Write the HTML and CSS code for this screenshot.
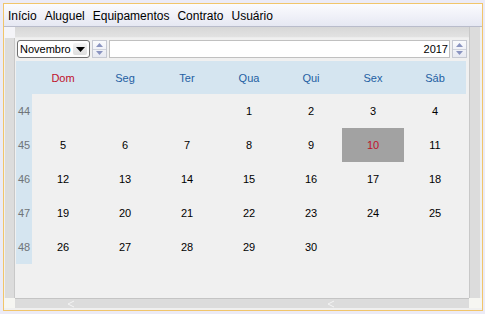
FILE: index.html
```html
<!DOCTYPE html>
<html lang="pt">
  <head>
    <meta charset="UTF-8">
    <title>Calendário</title>
    <link rel="stylesheet" href="styles.css">
  </head>
  <body>
    <div class="window">
      <div class="menubar">
        <span>Início</span>
        <span>Aluguel</span>
        <span>Equipamentos</span>
        <span>Contrato</span>
        <span>Usuário</span>
      </div>
      <div class="pane">
        <div class="strip-corner"></div>
        <div class="strip-top"></div>
        <div class="vbar"></div>

        <div class="strip-left"></div>
        <div class="calendar">
          <div class="nav">
            <div class="combo">
              <span class="combo-text">Novembro</span>
              <span class="combo-btn"><svg width="9" height="5" viewBox="0 0 9 5"><path d="M0 0h9L4.5 5z" fill="#000"/></svg></span>
            </div>
            <div class="spin">
              <span class="spin-up"><svg width="7" height="4" viewBox="0 0 7 4"><path d="M0 4h7L3.5 0z" fill="#8a94c0"/></svg></span>
              <span class="spin-down"><svg width="7" height="4" viewBox="0 0 7 4"><path d="M0 0h7L3.5 4z" fill="#8a94c0"/></svg></span>
            </div>
            <div class="year">2017</div>
            <div class="spin">
              <span class="spin-up"><svg width="7" height="4" viewBox="0 0 7 4"><path d="M0 4h7L3.5 0z" fill="#8a94c0"/></svg></span>
              <span class="spin-down"><svg width="7" height="4" viewBox="0 0 7 4"><path d="M0 0h7L3.5 4z" fill="#8a94c0"/></svg></span>
            </div>
          </div>
          <div class="month">
            <div class="wk head"></div>
            <div class="dname sun">Dom</div>
            <div class="dname">Seg</div>
            <div class="dname">Ter</div>
            <div class="dname">Qua</div>
            <div class="dname">Qui</div>
            <div class="dname">Sex</div>
            <div class="dname">Sáb</div>

            <div class="wk">44</div>
            <div class="day"></div><div class="day"></div><div class="day"></div>
            <div class="day">1</div><div class="day">2</div><div class="day">3</div><div class="day">4</div>

            <div class="wk">45</div>
            <div class="day">5</div><div class="day">6</div><div class="day">7</div>
            <div class="day">8</div><div class="day">9</div><div class="day today">10</div><div class="day">11</div>

            <div class="wk">46</div>
            <div class="day">12</div><div class="day">13</div><div class="day">14</div>
            <div class="day">15</div><div class="day">16</div><div class="day">17</div><div class="day">18</div>

            <div class="wk">47</div>
            <div class="day">19</div><div class="day">20</div><div class="day">21</div>
            <div class="day">22</div><div class="day">23</div><div class="day">24</div><div class="day">25</div>

            <div class="wk">48</div>
            <div class="day">26</div><div class="day">27</div><div class="day">28</div>
            <div class="day">29</div><div class="day">30</div><div class="day"></div><div class="day"></div>
          </div>
        </div>
        <div class="vbar right"></div>

        <div class="sb-corner"></div>
        <div class="hbar">
          <svg class="chev first" width="8" height="8" viewBox="0 0 8 8"><path d="M7 1L1 4l6 3" fill="none" stroke="#f4f4f4" stroke-width="1"/></svg>
          <svg class="chev" width="8" height="8" viewBox="0 0 8 8"><path d="M7 1L1 4l6 3" fill="none" stroke="#f4f4f4" stroke-width="1"/></svg>
        </div>
        <div class="sb-corner"></div>
      </div>
    </div>
  </body>
</html>
```

FILE: styles.css
```css
body {
    margin: 0;
    height: 314px;
    background-color: #ecebf6;
    font-family: "Liberation Sans", Arial, sans-serif;
    overflow: hidden;
}

.window {
    margin: 3px 0 0 3px;
    width: 478px;
    height: 306px;
    border: 1px solid #f1c56a;
    background-color: #f0f0f0;
    display: flex;
    flex-direction: column;
}

.menubar {
    height: 23px;
    border-bottom: 1px solid #b9bccb;
    background: linear-gradient(#fbfbfe, #e6e8f3);
    display: flex;
    align-items: center;
    gap: 8px;
    padding-left: 4px;
    padding-top: 1px;
    box-sizing: border-box;
    font-size: 12px;
    color: #000;
}

.pane {
    flex: 1;
    display: grid;
    grid-template-columns: 11px 454px 13px;
    grid-template-rows: 11px 260px 10px;
}

.strip-corner {
    background-color: #f4f4f8;
}

.strip-top {
    background: linear-gradient(#d7d7d7, #e2e2e2);
    border-bottom: 1px solid #ececec;
}

.vbar {
    grid-row: 1 / 3;
    grid-column: 3;
    background-color: #dcdcdc;
    border-left: 1px solid #c8c8c8;
    margin-right: 2px;
}

.strip-left {
    background-color: #dcdcdc;
    border-right: 1px solid #c8c8c8;
    margin-left: 1px;
}

.sb-corner {
    background-color: #f6f6f2;
}

.hbar {
    background-color: #dcdcdc;
    border-top: 1px solid #c4c4c4;
    display: flex;
    align-items: center;
}

.chev {
    margin-left: 252px;
}

.chev.first {
    margin-left: 52px;
}

/* calendário */

.calendar {
    background-color: #f0f0f0;
    padding: 1px 2px 0 1px;
}

.nav {
    display: flex;
    align-items: center;
    gap: 2px;
    height: 18px;
    margin-top: 1px;
    padding-left: 1px;
}

.combo {
    width: 71px;
    height: 16px;
    border: 1px solid #707070;
    border-radius: 3px;
    background-color: #fff;
    display: flex;
    align-items: center;
    font-size: 11px;
}

.combo-text {
    flex: 1;
    padding-left: 2px;
}

.combo-btn {
    width: 14px;
    height: 12px;
    display: flex;
    align-items: center;
    justify-content: center;
    margin-right: 2px;
    background: linear-gradient(#f4f4f4, #dedede);
    border-radius: 2px;
}

.spin {
    width: 15px;
    height: 18px;
    display: flex;
    flex-direction: column;
    border: 1px solid #c6c9d2;
    box-sizing: border-box;
    background: linear-gradient(#fafbfd, #e8eaf2);
}

.spin span {
    flex: 1;
    display: flex;
    align-items: center;
    justify-content: center;
}

.spin-up {
    border-bottom: 1px solid #d0d3dc;
}

.year {
    flex: 1;
    height: 18px;
    box-sizing: border-box;
    border: 1px solid #c0c0c0;
    background-color: #fff;
    font-size: 11px;
    text-align: right;
    line-height: 16px;
    padding-right: 1px;
}

.month {
    margin-top: 3px;
    display: grid;
    grid-template-columns: 16px repeat(7, 62px);
    grid-template-rows: 33px repeat(5, 34px);
    font-size: 11px;
}

.dname {
    background-color: #d5e5f0;
    color: #1f5fa3;
    display: flex;
    align-items: center;
    justify-content: center;
}

.dname.sun {
    color: #c0102a;
}

.wk {
    background-color: #d5e5f0;
    color: #6f7478;
    display: flex;
    align-items: center;
    justify-content: center;
}

.day {
    display: flex;
    align-items: center;
    justify-content: center;
    color: #000;
}

.day.today {
    background-color: #a2a2a2;
    color: #c0102a;
}
```
